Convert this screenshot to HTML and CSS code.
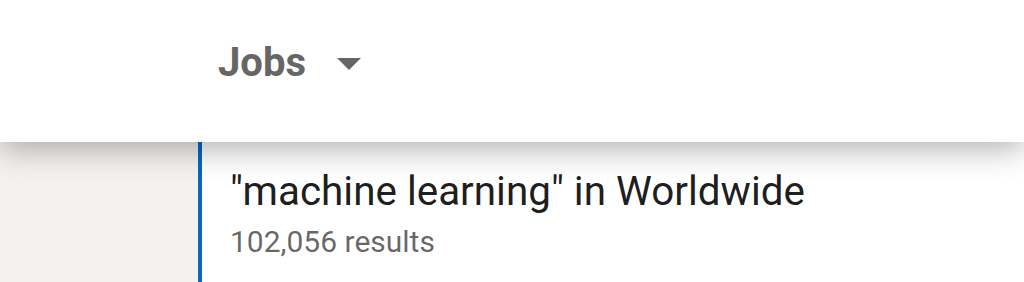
FILE: index.html
```html
<!DOCTYPE html>
<html>
<head>
    <meta charset="utf-8" />
    <title>Jobs</title>
    <link rel="stylesheet" href="styles.css">
</head>
<body>
    <div class="top-bar">
        <div class="menu-title">
            <span>Jobs</span>
            <span class="caret"></span>
        </div>
    </div>
    <div class="page">
        <div class="side-panel"></div>
        <div class="results-panel">
            <div class="search-title">"machine learning" in Worldwide</div>
            <div class="search-count">102,056 results</div>
        </div>
    </div>
</body>
</html>
```

FILE: styles.css
```css
html, body {
    margin: 0;
    height: 100%;
}

body {
    font-family: Roboto, "Liberation Sans", sans-serif;
    background: #ffffff;
    overflow: hidden;
}

.top-bar {
    position: relative; /*让阴影盖在下面的内容上*/
    z-index: 2;
    height: 142px;
    background: #ffffff;
    box-shadow: 0 6px 30px rgba(0,0,0,.32);
    display: flex;
    align-items: center;
    padding-left: 218px;
    box-sizing: border-box;
}

.menu-title {
    display: flex;
    align-items: center;
    gap: 30px;
    margin-top: -18px;
    font-size: 40px;
    font-weight: 700;
    color: #666666;
}

.caret {
    width: 0;
    height: 0;
    border: 12px solid transparent;
    border-bottom: 0;
    border-top-color: #666666;
    margin-top: 4px;
    margin-left: 1px;
}

.page {
    display: flex;
    height: 140px;
}

.side-panel {
    width: 198px;
    background: #f3f2ef;
}

.results-panel {
    flex: 1;
    border-left: 4px solid #0a66c2;
    padding: 26px 0 0 28px;
}

.search-title {
    font-size: 40.4px;
    line-height: 48px;
    color: rgba(0,0,0,.9);
}

.search-count {
    font-size: 30px;
    line-height: 40px;
    margin-top: 6px;
    color: rgba(0,0,0,.6);
}
```
